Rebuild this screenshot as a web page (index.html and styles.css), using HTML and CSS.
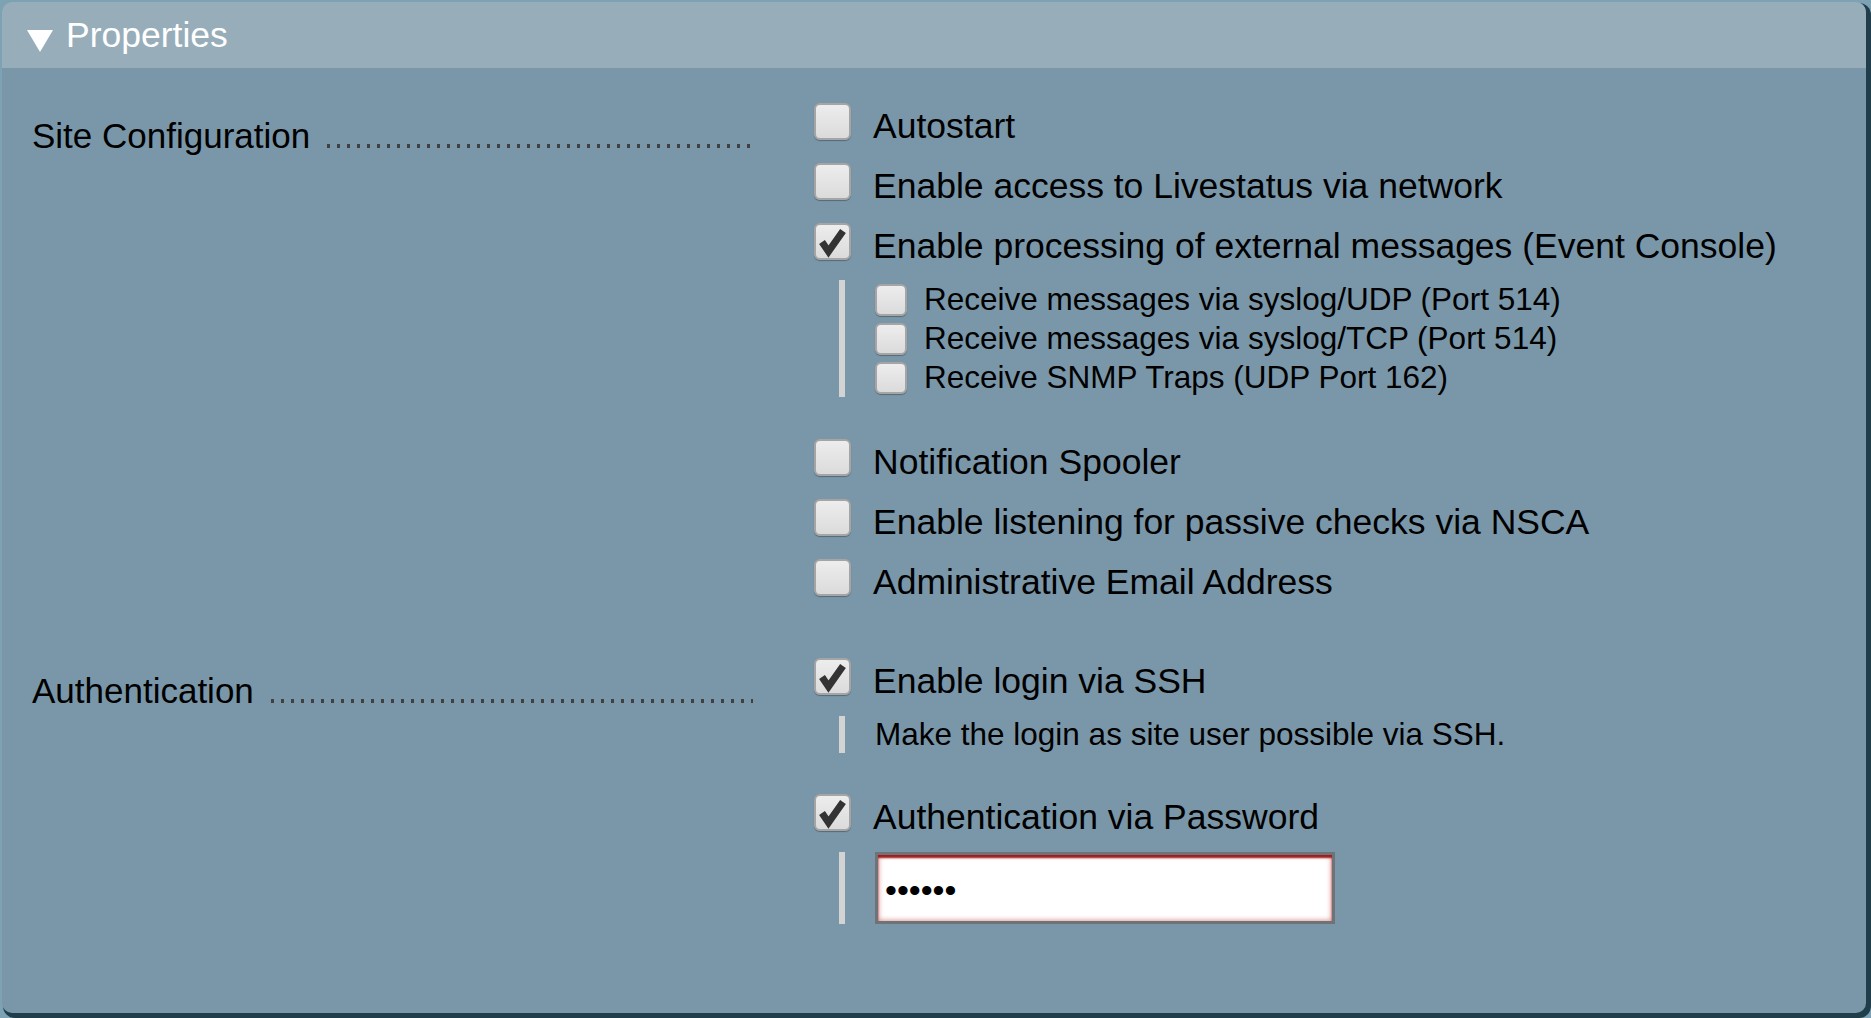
FILE: index.html
```html
<!DOCTYPE html>
<html>
<head>
<meta charset="utf-8">
<link rel="stylesheet" href="styles.css">
</head>
<body>
<div class="panel">
  <div class="header"><span class="tri"></span><span class="title">Properties</span></div>
  <div class="content">
    <div class="section">
      <div class="label"><span class="ltext">Site Configuration</span><span class="dots"></span></div>
      <div class="opts">
        <div class="row"><span class="cb"></span><span class="txt">Autostart</span></div>
        <div class="row"><span class="cb"></span><span class="txt">Enable access to Livestatus via network</span></div>
        <div class="row"><span class="cb checked"><svg viewBox="0 0 37 37"><path d="M8 19 L14.5 28.5 L29 8" /></svg></span><span class="txt">Enable processing of external messages (Event Console)</span></div>
        <div class="sub">
          <div class="subrow"><span class="cb small"></span><span class="subtxt">Receive messages via syslog/UDP (Port 514)</span></div>
          <div class="subrow"><span class="cb small"></span><span class="subtxt">Receive messages via syslog/TCP (Port 514)</span></div>
          <div class="subrow"><span class="cb small"></span><span class="subtxt">Receive SNMP Traps (UDP Port 162)</span></div>
        </div>
        <div class="row"><span class="cb"></span><span class="txt">Notification Spooler</span></div>
        <div class="row"><span class="cb"></span><span class="txt">Enable listening for passive checks via NSCA</span></div>
        <div class="row"><span class="cb"></span><span class="txt">Administrative Email Address</span></div>
      </div>
    </div>
    <div class="section s2">
      <div class="label"><span class="ltext">Authentication</span><span class="dots"></span></div>
      <div class="opts">
        <div class="row"><span class="cb checked"><svg viewBox="0 0 37 37"><path d="M8 19 L14.5 28.5 L29 8" /></svg></span><span class="txt">Enable login via SSH</span></div>
        <div class="desc">Make the login as site user possible via SSH.</div>
        <div class="row"><span class="cb checked"><svg viewBox="0 0 37 37"><path d="M8 19 L14.5 28.5 L29 8" /></svg></span><span class="txt">Authentication via Password</span></div>
        <div class="pwblock"><input class="pw" type="password" value="secret"></div>
      </div>
    </div>
  </div>
</div>
</body>
</html>
```
FILE: styles.css
```css
html, body {
  margin: 0;
  height: 100%;
  overflow: hidden;
}
body {
  background: #7ca2b3;
  padding: 2px 0 0 2px;
  box-sizing: border-box;
  font-family: "Liberation Sans", Arial, sans-serif;
  color: #000;
}
.panel {
  width: 1864px;
  height: 1011px;
  background: #7a97a9;
  border-radius: 10px;
  box-shadow: 3px 3px 0 2px #1f3d4b;
  overflow: hidden;
}
.header {
  height: 66px;
  background: #97adba;
  display: flex;
  align-items: center;
}
.tri {
  width: 0;
  height: 0;
  border-left: 13px solid transparent;
  border-right: 13px solid transparent;
  border-top: 22px solid #fff;
  margin-left: 25px;
  margin-top: 12px;
  margin-right: 13px;
}
.title {
  color: #fff;
  font-size: 35.5px;
  line-height: 40px;
}
.content {
  padding-top: 27px;
}
.section {
  display: grid;
  grid-template-columns: 812px 1fr;
}
.s2 {
  margin-top: 39px;
}
.label {
  display: flex;
  align-items: flex-start;
  padding: 21px 61px 0 30px;
  font-size: 35px;
  line-height: 40px;
  height: 40px;
}
.ltext {
  white-space: nowrap;
}
.dots {
  flex: 1;
  min-width: 0;
  height: 4px;
  margin: 28px 0 0 17px;
  background-image: linear-gradient(to right, #404040 3px, transparent 3px);
  background-size: 10px 4px;
  background-repeat: repeat-x;
}
.opts {
  display: flex;
  flex-direction: column;
}
.row {
  height: 60px;
  display: flex;
  align-items: flex-start;
}
.cb {
  flex: none;
  width: 37px;
  height: 37px;
  box-sizing: border-box;
  border: 2px solid #a5a5a5;
  border-radius: 6px;
  background: linear-gradient(#ededed, #dbdbdb);
  box-shadow: 0 1px 1px rgba(0, 0, 0, 0.3);
  margin-top: 8px;
  margin-right: 22px;
  display: flex;
}
.cb svg {
  width: 100%;
  height: 100%;
}
.cb svg path {
  fill: none;
  stroke: #333;
  stroke-width: 7;
  stroke-linejoin: miter;
}
.cb.checked svg {
  margin: -2px;
  width: 37px;
  height: 37px;
}
.cb.small {
  width: 32px;
  height: 32px;
  margin: 0 17px 0 0;
}
.txt {
  font-size: 35.5px;
  line-height: 40px;
  margin-top: 11px;
  white-space: nowrap;
}
.sub {
  margin: 5px 0 34px 25px;
  border-left: 6px solid #d3d3d3;
  padding-left: 30px;
}
.subrow {
  height: 39px;
  display: flex;
  align-items: center;
}
.subtxt {
  font-size: 31.5px;
  line-height: 39px;
  white-space: nowrap;
}
.desc {
  margin: 6px 0 33px 25px;
  border-left: 6px solid #d3d3d3;
  padding-left: 30px;
  font-size: 31.5px;
  line-height: 37px;
  white-space: nowrap;
}
.pwblock {
  margin: 6px 0 0 25px;
  border-left: 6px solid #d3d3d3;
  padding-left: 30px;
  height: 72px;
}
.pw {
  display: block;
  width: 460px;
  height: 72px;
  box-sizing: border-box;
  border: 3px solid #6e7377;
  background: #fff;
  box-shadow: inset 0 3px 2px #a01c1c, inset 0 0 5px 1px #e09a9a;
  padding: 4px 0 0 7px;
  margin: 0;
  font-family: "Liberation Sans", Arial, sans-serif;
  font-size: 34px;
  color: #000;
  outline: none;
}
```
